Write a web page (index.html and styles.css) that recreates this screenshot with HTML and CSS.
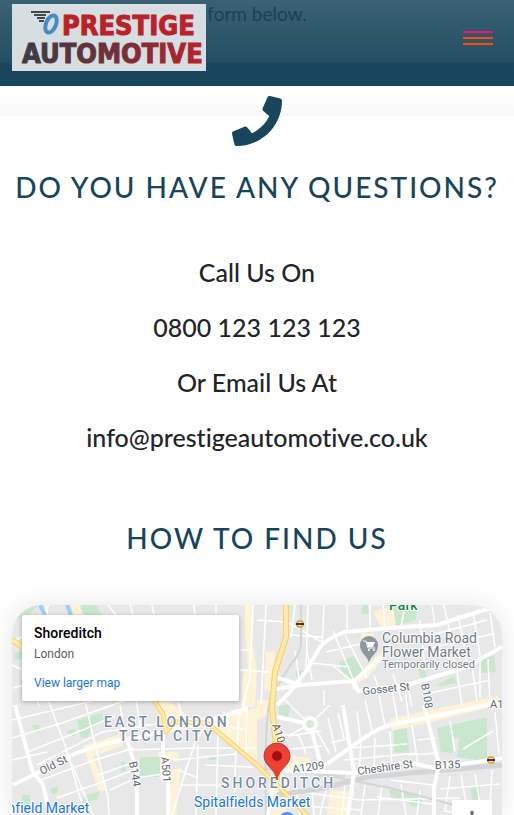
FILE: index.html
```html
<!DOCTYPE html>
<html lang="en">
<head>
<meta charset="utf-8">
<meta name="viewport" content="width=device-width, initial-scale=1">
<title>Prestige Automotive - Contact</title>
<link rel="stylesheet" href="styles.css">
</head>
<body>
<header class="navbar">
  <a class="brand" href="#" aria-label="Prestige Automotive">
    <svg class="logo" viewBox="0 0 194 67">
      <defs>
        <linearGradient id="fade" x1="0" x2="1"><stop offset="0" stop-color="#3b3c44"/><stop offset=".5" stop-color="#70303a"/><stop offset="1" stop-color="#b92229"/></linearGradient>
      </defs>
      <path d="M19 8h19M22 11h12M25 14h8M27 17h5" stroke="#42474d" stroke-width="2"/>
      <ellipse cx="39" cy="20" rx="5" ry="9" transform="rotate(22 39 20)" fill="#d6dee2" stroke="#468bc3" stroke-width="4"/>
      <text class="logo-top" x="50" y="31">PRESTIGE</text>
      <text class="logo-bottom" x="10" y="59">AUTOMOTIVE</text>
    </svg>
  </a>
  <button class="menu" type="button" aria-label="Menu"><span class="bar bar-pink"></span><span class="bar"></span><span class="bar"></span></button>
</header>
<main>
  <section class="intro"><p>form below.</p></section>
  <section class="contact">
    <svg class="phone" viewBox="0 0 512 512" aria-hidden="true"><path d="M493.4 24.6l-104-24c-11.3-2.6-22.9 3.3-27.5 13.9l-48 112c-4.2 9.8-1.4 21.3 6.9 28l60.6 49.6c-36 76.7-98.9 140.5-177.2 177.2l-49.6-60.6c-6.8-8.3-18.2-11.1-28-6.9l-112 48C3.9 366.5-2 378.1.6 389.4l24 104C27.1 504.2 36.7 512 48 512c256.1 0 464-207.5 464-464 0-11.2-7.7-20.9-18.6-23.4z"/></svg>
    <h2>Do you have any questions?</h2>
    <div class="details">
      <p>Call Us On</p>
      <p>0800 123 123 123</p>
      <p>Or Email Us At</p>
      <p>info@prestigeautomotive.co.uk</p>
    </div>
    <h2>How to find us</h2>
  </section>
  <section class="map">
    <svg class="map-art" viewBox="12 605 490 210" preserveAspectRatio="xMidYMin slice">
      <rect x="12" y="605" width="490" height="210" fill="#e8e8e8"/>
      <!-- commercial blocks -->
      <g fill="#fef3d8">
        <path d="M245 605h9l-2 36 5 31-2 35h-14l2-30 5-12-3-30zM71 605h9l2 10h-8zM158 700l10 0 22 18 27-2 40-8v55l-20-14-30-22-34 2-10 8z"/>
        <path d="M83 746l37-12 2 12-29 10 14 34-8 2zM158 752l20 0 1 8-10 1-2 18-8 0zM172 770l9-2-6 60h-8zM266 652l9-1-2 40-9-1zM257 700h15v12l-15 8zM330 790l25 2-8 23h-20z"/>
        <path d="M373 612l12-4 11 3v14l-15 2zM354 678l30-29 4 4-20 24-12 6zM360 633l14 1 0 21-6 4zM390 719l45-10 63-13 4 8-62 16-48 11zM285 755l25 3 2 12h-25zM269 775l12-3 9 17-4 26h-15z"/>
      </g>
      <!-- parks -->
      <g fill="#c9e7cd">
        <path d="M80 605h16l6 10H84zM24 605l14 0-9 10-13 4zM15 653l9-3v9l-9 1zM20 680l12-4 12 24H22zM388 605h29l-1 15-20 6-2-14zM362 605h6v9h-6zM339 662l14-6 10 15-5 10-11-3-6-8z"/>
        <path d="M77 720l25-7 2 9-11 5-5 10-7 1zM31 726l8-2 1 6-3 2zM67 731l8-2v7l-7-1zM140 757h20v20h-20zM121 763l4-3 1 11-5 1zM84 796l16-5-3 9-14 2zM50 789l8-3v6l-6 3zM22 795h8v10h-8zM209 757l8-1v4h-8z"/>
        <path d="M437 728l50-11v45l-30-5 2-19-7 1 1 14-12-1zM394 730l13-2 2 25-15-1zM480 660l14-5 2 17-15 1zM417 663l6-3 4 20-5 4zM436 685l18-9 3 7-16 3zM279 706l12-2-3 13-9-3zM389 790l14 0 18 6 2 8-11 3-5-6-15-1zM471 789l9-4-1 17-7-1zM296 670h8v7h-8zM315 773h25v4h-25z"/>
      </g>
      <!-- side streets -->
      <g class="lane">
        <path d="M12 720l85-20 70-2M12 738l50-15 70-25M25 753l60-24 30-13M37 765l65-33 54-8M12 760l35-8M48 700l17 45 20 70M85 700l7 32 16 65 1 18M68 755l25 60M41 780l48-18 45-14M57 798l48-17 31-12M98 775l37-13M110 790l26-12 27-4M125 750l70-2 62 0M120 705l6 35M136 700l5 31M172 815l23-73 12-18M180 790l7-25M178 770l20 8M198 745l-2 70M218 735l-2 80M236 748l-2 60M175 760l60-6M180 785l40 0M205 765l48 2M183 720l-5-18M224 712l6 20M239 710l-2 42M247 705l-1 52M186 718l60 12"/>
        <path d="M108 605l8 10M130 605l3 10M152 605l2 10M194 605l1 10M216 605v10M240 650h12M240 670l30 2M253 605l-3 72-9 38M266 605l-5 100M257 620l30 2 35 20M290 635l32 2M295 605l-4 33M308 605l-2 65M324 605l-2 43M347 605v27M370 605v25M383 605l2 22M405 605l-4 22M420 620l5 50M432 605l3 20M444 605l7 32 4 34M458 615l6 30 3 21M473 612l7 43 0 43M490 613l5 34M424 637l63-17M418 651l75-17M326 652l38-9M333 631l20 48M345 635l22 43M312 663l38 4M307 650l5 30M295 651l5 34M354 690l-2-9-20-16M374 675l7 20M393 674l9 27M407 682l5 25M457 671l5 35M472 665l5 36M488 659l2 44M430 693l60-13"/>
        <path d="M285 700l15 15 10 9 20-19M324 690l0 16M310 724l-22 12 33-5M299 736l7 18M316 730l14 24M328 718l8 34M338 713l6 25M331 743l18-5M357 711l4 33M365 700l7 30M379 695l6 31M392 690l6 33M405 690l4 30M352 748l55-4M361 742l-2 30M375 738l-1 35M390 731l2 36M412 725l6 39M418 740l18-2M408 755l31-2M344 760l73-7M450 721l5 30M495 712l4 43M463 749l30-18M282 735l18 0M280 750l42-4"/>
        <path d="M294 776l6 39M311 779l3 36M328 780l-8 35M345 784l-3 31M365 785l-4 30M382 785l-4 30M401 784l5 31M420 790l-3 25M300 792l60 8 100-2M302 806l60 4M377 797l55 7M391 780l42 5M450 776l-5 35 28 4M461 775l6 34M475 774l5 30M492 770l-2 34M440 789l60-5"/>
        <path d="M12 665l15 7 12 34M14 641l20-10 15-26M46 605l2 12M13 688l16-4"/>
      </g>
      <path d="M40 605l5 10M67 605l4 10" stroke="#9bd0fa" stroke-width="4"/>
      <!-- railways -->
      <g fill="none" stroke="#d3d5d7"><path d="M277 795l47-7 43-11 135-12" stroke-width="5"/><path d="M301 605v38q0 10-10 21l-19 31q-8 10-6 120M314 773l76 15 64 17M265 769l80 7" stroke-width="2"/></g>
      <!-- main roads -->
      <g class="road">
        <path d="M502 606l-18 4-47 15-47 3-46 4q-16 6-24 15l-13 23-17 22-13 13"/>
        <path d="M270 690l30-5 54-4 28-25M275 677l25 8M354 681l4 10 49-6 57-17 38-21M277 717l33 7 10 38M343 705l11 67-6 43"/>
        <path d="M287 771l37-5 40-28q14-10 26-13l40-8 72-15M277 770l77 3 53-11 27 6 43-6 25-4M424 705l15 60-5 23v27"/>
        <path d="M13 785l24-12 30-16q28-12 56-17l40-8 44-10 40-14M15 705l17 65 11 15 7 30M127 740l10 32v43M163 735v37l5 10v33M275 775l-7 40"/>
      </g>
      <circle cx="310" cy="724" r="6" fill="#d9ead8" stroke="#fff" stroke-width="4"/>
      <!-- trunk roads -->
      <g fill="none" stroke-linejoin="round">
        <path d="M286 605v32l-11 35-3 35 4 39 1 34M12 640l11 7" stroke="#f8cf68" stroke-width="6"/>
        <path d="M286 605v32l-11 35-3 35 4 39 1 34M12 640l11 7" stroke="#ffeaab" stroke-width="4"/>
        <path d="M154 700l9 14 3 18 8-10 33 1 50 42 50 50" stroke="#f8cf68" stroke-width="5"/>
        <path d="M154 700l9 14 3 18 8-10 33 1 50 42 50 50" stroke="#ffeaab" stroke-width="3"/>
      </g>
      <!-- stations -->
      <g fill="#fff" stroke="#e6a72d" stroke-width="2"><circle cx="300" cy="624" r="3"/><circle cx="491" cy="760" r="3"/></g>
      <path d="M296 624h8M487 760h8" stroke="#29366f" stroke-width="2"/>
      <!-- labels -->
      <g class="label">
        <text class="green" x="389" y="610">Park</text>
        <text class="place" x="382" y="643">Columbia Road</text>
        <text class="place" x="382" y="657">Flower Market</text>
        <text class="note" x="382" y="668">Temporarily closed</text>
        <text class="street" transform="translate(363 695) rotate(-6)">Gosset St</text>
        <text class="street" transform="translate(421 684) rotate(80)">B108</text>
        <text class="street" x="490" y="708">A1</text>
        <text class="street" transform="translate(42 775) rotate(-27)">Old St</text>
        <text class="street" transform="translate(129 762) rotate(80)">B144</text>
        <text class="street" transform="translate(161 757) rotate(85)">A501</text>
        <text class="street brown" transform="translate(272 725) rotate(72)">A10</text>
        <text class="street" transform="translate(293 773) rotate(-8)">A1209</text>
        <text class="street" transform="translate(358 775) rotate(-8)">Cheshire St</text>
        <text class="street" transform="translate(435 769) rotate(-2)">B135</text>
        <text class="area" x="104" y="727">EAST LONDON</text>
        <text class="area" x="119" y="741">TECH CITY</text>
        <text class="area" x="221" y="788">SHOREDITCH</text>
        <text class="blue" x="194" y="807">Spitalfields Market</text>
        <text class="blue" x="-21" y="813">Smithfield Market</text>
      </g>
      <!-- market marker -->
      <path d="M369 663c-1-7-9-9-9-18a9 9 0 0 1 18 0c0 9-8 11-9 18z" fill="#8e979f"/>
      <path d="M363 641h3l2 7h7" fill="none" stroke="#fff"/><path d="M367 642h8l-2 5h-5z" fill="#fff"/><circle cx="369" cy="650" r="1" fill="#fff"/><circle cx="374" cy="650" r="1" fill="#fff"/>
      <!-- location pin -->
      <path d="M277 780c-1-11-13-14-13-24a13 13 0 0 1 26 0c0 10-12 13-13 24z" fill="#ea4335" stroke="#c5362b" stroke-width="1"/>
      <circle cx="277" cy="756" r="5" fill="#a50e0e"/>
      <circle cx="287" cy="820" r="8" fill="#4d90fe"/>
    </svg>
    <div class="card">
      <h3>Shoreditch</h3>
      <p>London</p>
      <a href="#">View larger map</a>
    </div>
    <button class="zoom-in" type="button" aria-label="Zoom in"><svg viewBox="0 0 18 18"><path d="M0 9h18M9 0v18" stroke="#666" stroke-width="3"/></svg></button>
  </section>
</main>
</body>
</html>
```

FILE: styles.css
```css
* { box-sizing: border-box; }
body {
  margin: 0;
  background: #fff;
  color: #212529;
  font-family: Lato, "Open Sans", sans-serif;
  font-variant-ligatures: none;
}
h2, h3, p { margin: 0; }
main {
  display: flex;
  flex-direction: column;
  height: 100vh;
  overflow: hidden;
}
.navbar {
  position: fixed;
  top: 0;
  left: 0;
  right: 0;
  z-index: 10;
  display: flex;
  justify-content: space-between;
  align-items: flex-start;
  height: 86px;
  padding: 4px 12px;
  background: linear-gradient(rgba(24, 69, 91, .85), rgba(24, 69, 91, .95) 62px, #1a475d 64px, #18455b);
}
.brand { display: block; background: #d6dee2; }
.logo { display: block; width: 194px; height: 67px; }
.logo text {
  font-family: "DejaVu Sans Condensed", "DejaVu Sans", sans-serif;
  font-weight: 700;
  stroke-width: 1px;
}
.logo-top { font-size: 27px; fill: #b92229; stroke: #b92229; }
.logo-bottom { font-size: 27px; fill: url(#fade); stroke: url(#fade); }
.menu {
  display: flex;
  flex-direction: column;
  gap: 4px;
  margin: 27px 9px 0 0;
  padding: 0;
  border: 0;
  background: none;
}
.bar { width: 30px; height: 2px; background: #ff4b0d; }
.bar-pink { background: #f5127b; }
.intro {
  flex: none;
  height: 116px;
  background: linear-gradient(#fff 90px, #fafafa);
  font-size: 19px;
  line-height: 28px;
  text-align: center;
}
.contact {
  display: flex;
  flex-direction: column;
  align-items: center;
  flex: none;
  margin-top: -20px;
  text-align: center;
}
.phone { width: 50px; height: 50px; fill: #18455b; }
h2 {
  margin-top: 23px;
  color: #18455b;
  font-size: 28px;
  font-weight: 500;
  line-height: 36px;
  letter-spacing: 2px;
  text-transform: uppercase;
}
.details {
  display: grid;
  gap: 16px;
  margin: 48px 0 40px;
  font-size: 25px;
  font-weight: 500;
  line-height: 39px;
}
.map {
  position: relative;
  flex: 1;
  min-height: 210px;
  margin: 49px 12px 0;
  border-radius: 30px 30px 0 0;
  box-shadow: 0 0 24px rgba(0, 0, 0, .1);
}
.map-art {
  display: block;
  width: 100%;
  height: 100%;
  border-radius: inherit;
}
.lane { fill: none; stroke: #fff; stroke-width: 1.5; }
.road { fill: none; stroke: #fff; stroke-width: 4; stroke-linejoin: round; }
.label {
  font-family: Roboto, sans-serif;
  paint-order: stroke;
  stroke: #fff;
  stroke-width: 2px;
  stroke-linejoin: round;
}
.street { font-size: 11px; fill: #5b6670; }
.brown { fill: #79551b; }
.place { font-size: 14px; fill: #707a83; }
.note { font-size: 11px; fill: #707a83; }
.green { font-size: 14px; font-weight: 500; fill: #188045; }
.blue { font-size: 14px; fill: #1976de; }
.area { font-size: 14px; font-weight: 500; letter-spacing: 3px; fill: #7a8ba3; }
.card {
  position: absolute;
  top: 10px;
  left: 10px;
  width: 217px;
  padding: 8px 12px 9px;
  border-radius: 2px;
  background: #fff;
  box-shadow: 0 1px 4px rgba(0, 0, 0, .3);
  font-family: Roboto, sans-serif;
  font-size: 12px;
  line-height: 18px;
}
.card h3 { color: #000; font-size: 14px; font-weight: 500; line-height: 20px; }
.card p { margin: 2px 0 11px; color: #5b5b5b; }
.card a { display: block; color: #1a73e8; text-decoration: none; }
.zoom-in {
  position: absolute;
  top: 195px;
  right: 10px;
  width: 40px;
  height: 40px;
  padding: 11px;
  border: 0;
  border-radius: 2px;
  background: #fff;
}
.zoom-in svg { display: block; width: 18px; height: 18px; }
```
